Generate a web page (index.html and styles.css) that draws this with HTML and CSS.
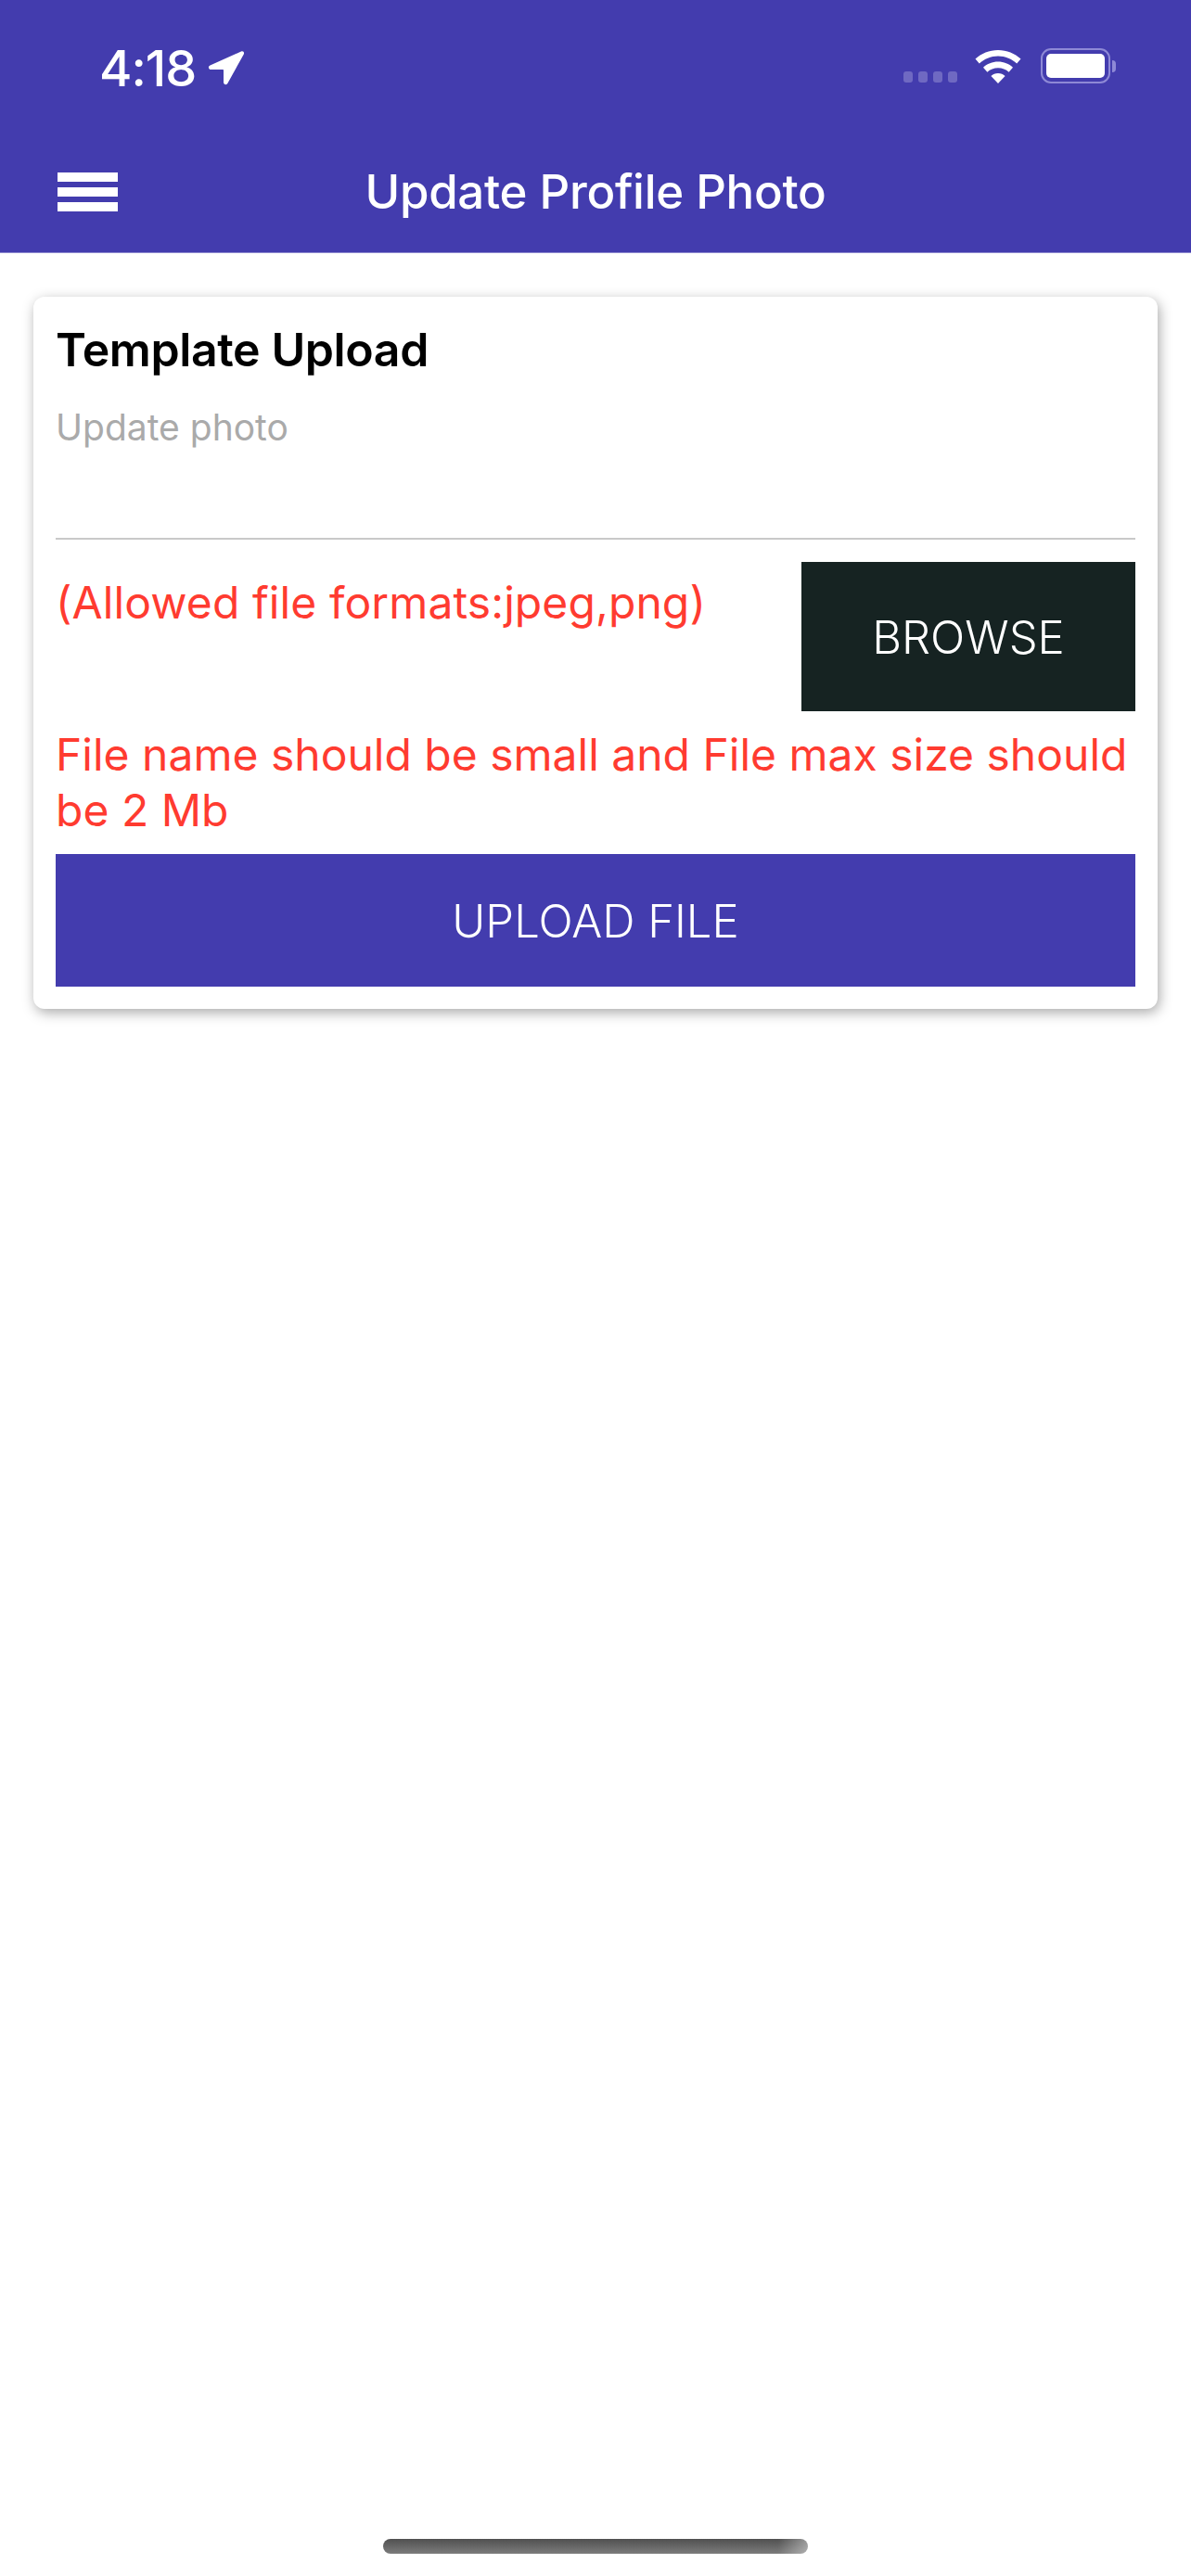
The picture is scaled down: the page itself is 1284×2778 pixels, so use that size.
FILE: index.html
```html
<!DOCTYPE html>
<html lang="en">
<head>
    <meta charset="UTF-8">
    <meta name="viewport" content="width=device-width, initial-scale=1.0">
    <title>Update Profile Photo</title>
    <link rel="stylesheet" href="styles.css">
</head>

<body>
<div class="app">
    <!-- header -->
    <div class="header">
        <div class="status-bar">
            <div class="status-left">
                <span class="time">4:18</span>
                <svg class="arrow-icon" viewBox="0 0 41 38" width="41" height="38">
                    <path d="M37 1.500 3.500 16.500c-2.600 1.200-1.800 4.600 1 4.600H17c.6 0 1 .4 1 1v12.400c0 3 3.500 3.600 4.600 1L39.800 4.500c.9-2.200-.8-3.900-2.800-3z" fill="#fff"/>
                </svg>
            </div>
            <div class="status-right">
                <div class="signal-dots">
                    <span></span><span></span><span></span><span></span>
                </div>
                <svg class="wifi-icon" viewBox="0 0 50 36" width="50" height="36">
                    <path d="M25 0C15.500 0 7 3.600.500 9.600l4.300 4.900C10.100 9.500 17.200 6.500 25 6.500s14.900 3 20.200 8l4.300-4.900C43 3.600 34.500 0 25 0z" fill="#fff"/>
                    <path d="M25 12.500c-6.200 0-11.800 2.300-16 6.200l4.400 5c3-2.700 7.100-4.400 11.600-4.400s8.600 1.700 11.600 4.400l4.400-5c-4.200-3.900-9.800-6.200-16-6.200z" fill="#fff"/>
                    <path d="M25 25c-3 0-5.600 1.100-7.600 3L25 36l7.600-8c-2-1.900-4.600-3-7.600-3z" fill="#fff"/>
                </svg>
                <div class="battery">
                    <div class="battery-body"><div class="battery-fill"></div></div>
                    <div class="battery-cap"></div>
                </div>
            </div>
        </div>
        <div class="title-bar">
            <div class="menu-icon">
                <span></span><span></span><span></span>
            </div>
            <h1 class="page-title">Update Profile Photo</h1>
        </div>
    </div>

    <!-- upload card -->
    <div class="content">
        <div class="card">
            <h2 class="card-title">Template Upload</h2>
            <div class="photo-field">
                <span class="field-label">Update photo</span>
            </div>
            <div class="browse-row">
                <p class="formats">(Allowed file formats:jpeg,png)</p>
                <button class="browse-button">BROWSE</button>
            </div>
            <p class="size-note">File name should be small and File max size should be 2 Mb</p>
            <button class="upload-button">UPLOAD FILE</button>
        </div>
    </div>

    <div class="home-indicator"></div>
</div>
</body>
</html>
```

FILE: styles.css
```css
* {
    box-sizing: border-box;
}
body {
    margin: 0;
    background-color: #fff;
    font-family: Inter, "Liberation Sans", sans-serif;
}
.app {
    display: flex;
    flex-direction: column;
    height: 2778px;
    overflow: hidden;
}
.header {
    height: 273px;
    flex-shrink: 0;
    background-color: #433cae;
    border-bottom: 1px solid #8e89cf;
    color: #fff;
}
.status-bar {
    display: flex;
    justify-content: space-between;
    align-items: flex-start;
    height: 150px;
    padding: 52px 81px 0 107px;
}
.status-left {
    display: flex;
    align-items: center;
    gap: 12px;
}
.time {
    padding-top: 2px;
    font-size: 54px;
    font-weight: 500;
    line-height: 40px;
    letter-spacing: -1px;
}
.arrow-icon {
    display: block;
}
.status-right {
    display: flex;
    align-items: flex-end;
    height: 38px;
}
.signal-dots {
    display: flex;
    gap: 6px;
    margin-right: 19px;
    margin-bottom: 1px;
}
.signal-dots span {
    width: 10px;
    height: 12px;
    border-radius: 3px;
    background-color: #6f69c2;
}
.wifi-icon {
    display: block;
    margin-right: 21px;
}
.battery {
    display: flex;
    align-items: center;
}
.battery-body {
    width: 75px;
    height: 38px;
    padding: 4px;
    border: 2px solid #8e89d6;
    border-radius: 11px;
}
.battery-fill {
    height: 100%;
    background-color: #fff;
    border-radius: 5px;
}
.battery-cap {
    width: 4px;
    height: 13px;
    margin-left: 2px;
    background-color: #8e89d6;
    border-radius: 0 4px 4px 0;
}
.title-bar {
    position: relative;
    display: flex;
    align-items: center;
    justify-content: center;
    height: 122px;
    margin-top: -4px;
}
.menu-icon {
    position: absolute;
    left: 62px;
    top: 40px;
    display: flex;
    flex-direction: column;
    gap: 6px;
    width: 65px;
}
.menu-icon span {
    height: 10px;
    background-color: #fff;
}
.page-title {
    margin: 0;
    font-size: 51px;
    font-weight: 500;
    line-height: 60px;
    letter-spacing: -0.3px;
}
.content {
    flex: 1;
    padding: 47px 36px 0;
}
.card {
    height: 768px;
    padding: 24px;
    background-color: #fff;
    border-radius: 12px;
    box-shadow: 2px 4px 14px rgba(0, 0, 0, 0.34);
}
.card-title {
    margin: 0;
    font-size: 50px;
    font-weight: 600;
    line-height: 66px;
    letter-spacing: -0.4px;
    color: #000;
}
.photo-field {
    height: 172px;
    padding-top: 28px;
    border-bottom: 2px solid #c9c9c9;
}
.field-label {
    display: block;
    font-size: 39px;
    line-height: 46px;
    color: #aaa;
}
.browse-row {
    display: flex;
    justify-content: space-between;
    align-items: flex-start;
    margin-top: 24px;
}
.formats {
    margin: 0;
    padding-top: 14px;
    font-size: 48px;
    line-height: 60px;
    color: #ff3b30;
    letter-spacing: 0.1px;
}
.browse-button, .upload-button {
    border: none;
    padding: 2px 0 0;
    color: #fff;
    font-family: inherit;
    font-size: 49px;
    font-weight: 300;
}
.browse-button {
    width: 360px;
    height: 161px;
    background-color: #162322;
}
.size-note {
    margin: 17px 0 0;
    font-size: 48px;
    line-height: 60px;
    color: #ff3b30;
}
.upload-button {
    display: block;
    width: 100%;
    height: 143px;
    margin-top: 17px;
    background-color: #433cae;
}
.home-indicator {
    flex-shrink: 0;
    align-self: center;
    width: 458px;
    height: 16px;
    margin-bottom: 24px;
    border-radius: 8px;
    background: linear-gradient(to right, rgba(255, 255, 255, 0) 93%, rgba(255, 255, 255, 0.4)), linear-gradient(#505050, #7c7c7c);
}
```
